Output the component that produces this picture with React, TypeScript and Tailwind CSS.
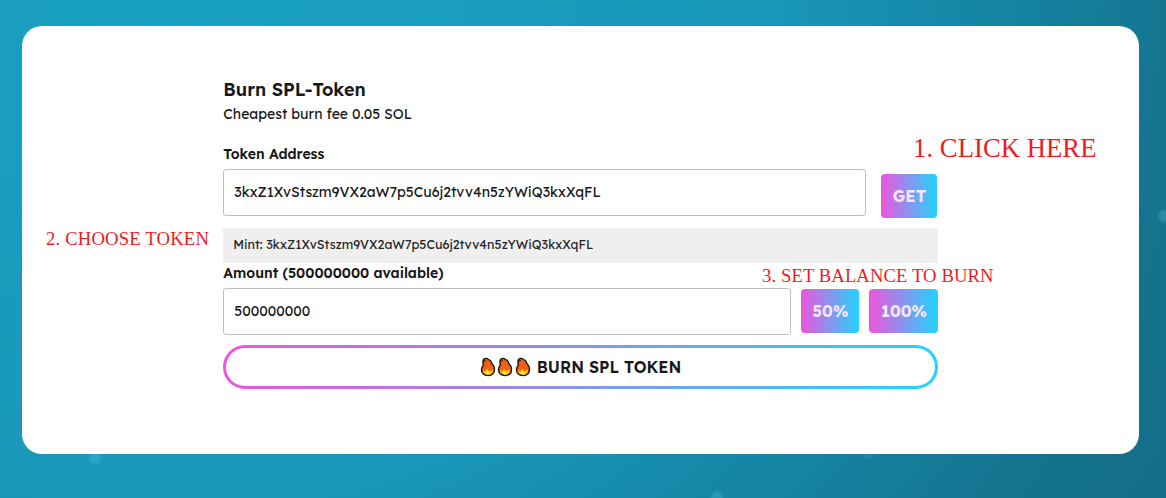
import type { ReactNode } from "react";

const TOKEN = "3kxZ1XvStszm9VX2aW7p5Cu6j2tvv4n5zYWiQ3kxXqFL";

function Flame() {
  return (
    <svg viewBox="0 0 16 20" className="h-5 w-4 shrink-0">
      <path
        d="M3.8 2.2C5 1 7.6 1 8.8 2.9c1.3-.1 2 .7 2.3 1.9.3 1 .3 1.5 1.1 2.2 1.5 1.3 2.3 2.9 2.3 5 0 4.2-2.3 6.5-6.4 6.5-4.3 0-6.7-2.5-6.6-6 .1-2 1.2-3.4 2-4.8-.7-1.7-.8-4.1.3-5.5Z"
        fill="#f4600c"
        stroke="#161616"
        strokeWidth="1.4"
        strokeLinejoin="round"
      />
      <path d="M4.2 2.9 6.2 2.5 5.4 4.8 4.3 5.2Z" fill="#642611" />
      <path
        d="M3.3 13 5 14.4 7.1 11.6 9 14.2 12.8 12.4c.5 3.5-1.4 5.3-4.7 5.3-3.5 0-5.5-1.8-4.8-4.7Z"
        fill="#ffc400"
      />
      <path d="m7.4 13.2 2.1 3-1.8 1.4-2.4-1.4Z" fill="#fff36c" />
    </svg>
  );
}

function GradientButton({ className, children }: { className: string; children: ReactNode }) {
  return (
    <button
      className={`h-11 shrink-0 rounded-[4px] bg-linear-to-r/srgb from-[#ee55dc] to-[#20d4ff] pl-px text-center text-[16px] font-bold text-[#f5e6fb] ${className}`}
    >
      {children}
    </button>
  );
}

export default function App() {
  return (
    <main className="relative h-[498px] w-[1166px] overflow-hidden bg-[radial-gradient(ellipse_1250px_1150px_at_180px_-40px,#1aa1c2_0%,#1998ba_46%,#1586a5_64%,#14728d_82%,#136983_100%)] pt-[26px] pl-[22px] text-[#171719] [font-family:Lexend,Inter,sans-serif]">
      <i className="absolute top-[452px] left-[89px] size-3 rounded-full bg-[#38b6d3]/50 blur-[1px]" />
      <i className="absolute top-[210px] left-[1158px] size-3 rounded-full bg-[#3b9db7]/60 blur-[1px]" />
      <i className="absolute top-[491px] left-[711px] size-3 rounded-full bg-[#35aac4]/50 blur-[1px]" />
      <i className="absolute top-[447px] left-[863px] size-3 rounded-full bg-[#269ab7]/40 blur-[1px]" />

      <section className="relative h-[428px] w-[1117px] rounded-[20px] bg-white pt-[52px] pl-[201px]">
        <div className="flex w-[715px] flex-col">
          <h1 className="h-6 pl-[0.3px] text-[18px] leading-6 font-semibold whitespace-nowrap">Burn SPL-Token</h1>
          <p className="h-6 pl-[0.3px] text-[14px] leading-6 whitespace-nowrap">Cheapest burn fee 0.05 SOL</p>
          <label className="mt-[18px] h-[25px] pl-[0.3px] text-[14px] leading-5 font-semibold whitespace-nowrap">
            Token Address
          </label>
          <div className="flex items-end justify-between">
            <div className="flex h-[47px] w-[643px] items-center rounded-[3px] border border-[#bfbfbf] px-[10.3px] text-[14px]">
              <span>{TOKEN}</span>
            </div>
            <GradientButton className="relative top-[2px] mr-px w-14">GET</GradientButton>
          </div>
          <div className="mt-3 flex h-[35px] items-center bg-[#efefef] px-[10.3px] pb-[2px] text-[12.5px] text-[#242426]">
            <span>Mint: {TOKEN}</span>
          </div>
          <label className="h-[25px] pl-[0.3px] text-[14px] leading-5 font-semibold whitespace-nowrap">
            Amount (500000000 available)
          </label>
          <div className="flex items-start gap-[10px]">
            <div className="flex h-[47px] w-[568px] items-center rounded-[3px] border border-[#bfbfbf] px-[10.3px] text-[14px]">
              <span>500000000</span>
            </div>
            <GradientButton className="mt-px w-[58px]">50%</GradientButton>
            <GradientButton className="mt-px w-[69px]">100%</GradientButton>
          </div>
          <button className="mt-[10px] h-11 rounded-full bg-linear-to-r/srgb from-[#ee55dc] to-[#20d4ff] p-[3px]">
            <span className="flex h-full items-center justify-center rounded-full bg-white text-[16px] font-semibold">
              <span className="mr-[6px] flex gap-[1.5px]">
                <Flame />
                <Flame />
                <Flame />
              </span>
              <span>BURN SPL TOKEN</span>
            </span>
          </button>
        </div>

        <div className="absolute top-[105px] left-[891px] text-[26.67px] leading-[34px] tracking-[0.05px] whitespace-nowrap text-[#ed1c24] [font-family:'Liberation_Serif',serif]">
          1. CLICK HERE
        </div>
        <div className="absolute top-[202px] left-[24px] text-[18.67px] leading-[22px] tracking-[0.17px] whitespace-nowrap text-[#ed1c24] [font-family:'Liberation_Serif',serif]">
          2. CHOOSE TOKEN
        </div>
        <div className="absolute top-[239px] left-[740px] text-[18.67px] leading-[22px] tracking-[0.09px] whitespace-nowrap text-[#ed1c24] [font-family:'Liberation_Serif',serif]">
          3. SET BALANCE TO BURN
        </div>
      </section>
    </main>
  );
}
